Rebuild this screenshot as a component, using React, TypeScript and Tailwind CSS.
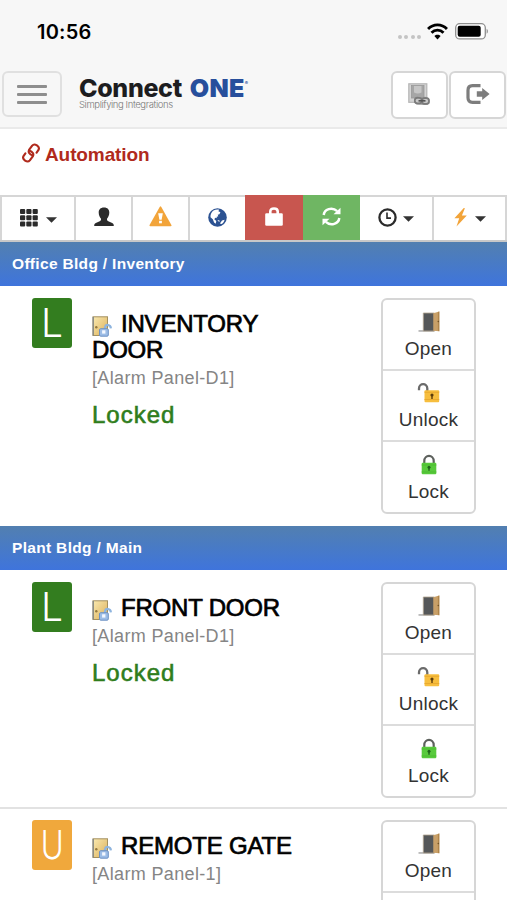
import React from "react";

type Door = {
  name: string;
  panel: string;
  badge: "L" | "U";
  status?: string;
};

type Area = {
  title: string;
  doors: Door[];
};

const areas: Area[] = [
  {
    title: "Office Bldg / Inventory",
    doors: [
      { name: "INVENTORY DOOR", panel: "[Alarm Panel-D1]", badge: "L", status: "Locked" },
    ],
  },
  {
    title: "Plant Bldg / Main",
    doors: [
      { name: "FRONT DOOR", panel: "[Alarm Panel-D1]", badge: "L", status: "Locked" },
      { name: "REMOTE GATE", panel: "[Alarm Panel-1]", badge: "U" },
    ],
  },
];

const WifiIcon = () => (
  <svg width="21" height="17" viewBox="0 0 20 16" fill="none" stroke="#000" strokeWidth="2.7">
    <path d="M1 5.6C6 .4 14 .4 19 5.6" />
    <path d="M4.3 9.2c3.2-3.3 8.2-3.3 11.4 0" />
    <path d="M10 15.6l-3-3.2c1.6-1.7 4.4-1.7 6 0z" fill="#000" stroke="none" />
  </svg>
);

const BatteryIcon = () => (
  <svg width="34" height="17" viewBox="0 0 34 17">
    <rect x="0.7" y="0.7" width="29.6" height="15.2" rx="4" fill="#fff" stroke="#8e8e8e" strokeWidth="1.3" />
    <rect x="2.7" y="2.8" width="23" height="11" rx="2" fill="#000" />
    <path d="M31.6 5.8c1.7.7 1.7 4.3 0 5z" fill="#8e8e8e" />
  </svg>
);

const LinkPlateIcon = () => (
  <svg width="23" height="24" viewBox="0 0 23 24">
    <rect x="0.8" y="0.8" width="18" height="18.5" fill="#d4d4d4" stroke="#b5b5b5" strokeWidth="1.2" />
    <rect x="3.5" y="2.500" width="12.500" height="12.500" fill="#a6a6a6" stroke="#999" strokeWidth="0.8" />
    <path d="M6 3h7.500v6.500q-3.700 2-7.500 0z" fill="#c6c6c6" />
    <path d="M6.500 15.500q3-4 6 0l2-1q4-2 7 2v4q-1.500 1.500-4 1.500l-9-.5-2.500-2z" fill="#949494" />
    <rect x="6.800" y="14.800" width="7" height="5.600" rx="2.600" fill="#c9c9c9" stroke="#7b7b7b" strokeWidth="1.700" />
    <rect x="14" y="15.200" width="7" height="5.600" rx="2.600" fill="#c9c9c9" stroke="#7b7b7b" strokeWidth="1.700" />
    <path d="M10.500 17.800h7" stroke="#555" strokeWidth="1.700" />
  </svg>
);

const LogoutIcon = () => (
  <svg width="24" height="20" viewBox="0 0 24 20">
    <path d="M14.500 1.700H6.500Q2 1.700 2 6.200v7.600q0 4.500 4.500 4.500h8" fill="none" stroke="#7d7d7d" strokeWidth="3.200" />
    <path d="M10.800 7.300h5.400V4l7.400 6-7.400 6v-3.300h-5.400z" fill="#7d7d7d" />
  </svg>
);

const ChainIcon = () => (
  <svg width="18" height="20" viewBox="0 0 18 20" fill="none" stroke="#b02a1c" strokeWidth="2.1" strokeLinecap="round" strokeLinejoin="round">
    <path d="M10.900 12.600C7.200 11.300 5.800 8.900 7.200 6.700L10.200 2.600C12.600-.2 18.300 3.500 16.500 6.900L14.600 9.600" />
    <path d="M7.100 7.400C10.800 8.700 12.200 11.100 10.800 13.300L7.800 17.400C5.400 20.200-.3 16.500 1.500 13.100L3.400 10.400" />
  </svg>
);

const Caret = () => (
  <svg className="mt-1" width="11" height="6" viewBox="0 0 11 6">
    <path d="M0 .2h11L5.500 5.700z" fill="#333" />
  </svg>
);

const GridIcon = () => (
  <svg width="18" height="18" viewBox="0 0 18 18" fill="#2b2b2b">
    {[0, 6.3, 12.6].map((y) =>
      [0, 6.3, 12.6].map((x) => (
        <rect key={`${x}-${y}`} x={x} y={y} width="5.200" height="5" rx="1" />
      ))
    )}
  </svg>
);

const UserIcon = () => (
  <svg width="20" height="20" viewBox="0 0 20 20" fill="#2b2b2b">
    <path d="M10 .5c3.700 0 5.300 2.200 5.300 5.100 0 2.700-1.100 4.800-2.200 5.900-.4 1.500.1 2.300 1.200 2.800l3.900 1.700c1.100.5 1.600 1 1.600 3H.2c0-2 .5-2.500 1.600-3l3.900-1.700c1.100-.5 1.600-1.300 1.200-2.800-1.100-1.100-2.200-3.200-2.200-5.900C4.700 2.700 6.300.5 10 .5z" />
  </svg>
);

const WarningIcon = () => (
  <svg width="23" height="21" viewBox="0 0 23 21">
    <path d="M10.700.9q.8-1.300 1.600 0L22.400 19q.5 1.300-.8 1.300H1.400Q.1 20.300.6 19z" fill="#f2a43a" />
    <path d="M9.200 7.300h4.600l-1.200 6.500h-2.200z" fill="#fff" />
    <rect x="10.100" y="14.800" width="2.800" height="2.500" fill="#fff" />
  </svg>
);

const GlobeIcon = () => (
  <svg width="19" height="19" viewBox="0 0 19 19">
    <circle cx="9.500" cy="9.500" r="9.300" fill="#2c5292" />
    <path d="M5.500 2.600c2-1.200 4-1.300 5.600-.8l-.7 1.500 2 .9-1 2-1.700.5.600 1.600-2 .6 1 1.300-2-.4-1 1.400 2 1.900-.6 2.700-1.600-1.400-1.300-3.200-2.300-2c-.3-2.600 1-5 3-6.600z" fill="#fff" />
    <path d="M14 12.500l2.600-.8c-.4 1.900-1.400 3.200-2.900 4.200l-1.800-.4zM9.800 12l2 .7-.3 1-1.700-.6z" fill="#fff" />
  </svg>
);

const LockdownIcon = () => (
  <svg width="18" height="19" viewBox="0 0 18 19">
    <path d="M5.300 9V4.500Q5.300 1.500 9 1.500T12.700 4.500V9" fill="none" stroke="#fff" strokeWidth="2.600" />
    <rect x="0.200" y="6.300" width="17.600" height="12.500" rx="1.300" fill="#fff" />
  </svg>
);

const RefreshIcon = () => (
  <svg width="19" height="19" viewBox="0 0 19 19">
    <path d="M1.700 8C2.300 2.300 10-.6 15.200 4.200M17.300 11C16.700 16.700 9 19.600 3.800 14.800" fill="none" stroke="#fff" strokeWidth="2.500" />
    <path d="M18.500.8v6.500H11.500zM.5 18.200v-6.500h7z" fill="#fff" />
  </svg>
);

const ClockIcon = () => (
  <svg width="19" height="19" viewBox="0 0 19 19" fill="none" stroke="#2b2b2b">
    <circle cx="9.500" cy="9.500" r="8.100" strokeWidth="2.300" />
    <path d="M9 4.500v5.600h4" strokeWidth="1.600" />
  </svg>
);

const BoltIcon = () => (
  <svg width="13" height="19" viewBox="0 0 13 19" fill="#f2a43a">
    <path d="M9.800 0L.4 10.300h4.800L2.500 18.600 12.800 7.400H7.900L10.900.2z" />
  </svg>
);

// small door glyph drawn in front of every door name
const DoorLockIcon = () => (
  <svg className="mr-2 inline-block align-[-5px]" width="21" height="21" viewBox="0 0 21 21">
    <defs>
      <linearGradient id="doorWood" x1="0" y1="0" x2="1" y2="1">
        <stop offset="0" stopColor="#f9e9b0" />
        <stop offset="1" stopColor="#dcb05a" />
      </linearGradient>
    </defs>
    <rect x="1" y="0.800" width="14.500" height="18.700" fill="url(#doorWood)" stroke="#a3905f" strokeWidth="1" />
    <path d="M1.200 1v18.500" stroke="#7c8388" strokeWidth="1.200" />
    <circle cx="4.300" cy="11.200" r="1.200" fill="#94783c" />
    <path d="M13 13v-1.500c.5-3.600 5.600-3.400 5.900.8" fill="none" stroke="#8eb4de" strokeWidth="2.200" />
    <rect x="7.500" y="12.700" width="8.800" height="7.500" rx="1.200" fill="#9dbde6" stroke="#6d92c4" strokeWidth="1" />
    <rect x="10.100" y="14.300" width="3.300" height="3.300" fill="#f4f8ff" />
  </svg>
);

const OpenDoorIcon = () => (
  <svg width="24" height="22" viewBox="0 0 24 22">
    <path d="M1.500 20.700h16v-1.500h-16z" fill="#aaa" />
    <path d="M6.300 2h11v18h-11z" fill="#555759" stroke="#b3a58f" strokeWidth="0.800" />
    <path d="M16.300 2.300L22.300.500v19.700l-6-.5z" fill="#c9a068" />
    <path d="M20.900 1l1.400-.5v19.700l-1.400-.2z" fill="#b0854b" />
    <circle cx="21.300" cy="10.500" r=".8" fill="#6e5127" />
  </svg>
);

const UnlockIcon = () => (
  <svg width="24" height="22" viewBox="0 0 24 22">
    <path d="M2 8.200V6.500C2 .7 10.300.7 10.300 6.500V9" fill="none" stroke="#6b6b6b" strokeWidth="2.300" />
    <rect x="7.500" y="8.300" width="14.700" height="11.900" rx="1" fill="#f7be3e" />
    <path d="M7.500 17.500h14.700M7.500 10.300h14.700" stroke="#e9aa30" strokeWidth="1" />
    <circle cx="15" cy="13" r="1.600" fill="#5b3c0c" />
    <path d="M14.300 13h1.400v4h-1.400z" fill="#5b3c0c" />
  </svg>
);

const LockIcon = () => (
  <svg width="24" height="22" viewBox="0 0 24 22">
    <path d="M7.300 10V7C7.300.200 16.700.200 16.700 7V10" fill="none" stroke="#5d615d" strokeWidth="2.200" />
    <rect x="4.700" y="8.800" width="14.600" height="11.500" rx="1" fill="#58ca3c" />
    <path d="M4.700 18h14.600M4.700 11h14.600" stroke="#4cbc31" strokeWidth="1" />
    <circle cx="12" cy="13.300" r="1.500" fill="#1f641a" />
    <path d="M11.300 13h1.400v3.700h-1.400z" fill="#1f641a" />
  </svg>
);

const actions = [
  { label: "Open", icon: <OpenDoorIcon /> },
  { label: "Unlock", icon: <UnlockIcon /> },
  { label: "Lock", icon: <LockIcon /> },
];

const DoorRow = ({ door }: { door: Door }) => (
  <div className="flex h-[239px] items-start pt-[11px] pr-[31px] pl-8 first:pt-3">
    <div
      className={`flex h-[50px] w-10 shrink-0 items-center justify-center rounded-[3px] pb-px font-['Inter',sans-serif] text-[39px] leading-none font-light text-white ${
        door.badge === "L" ? "bg-[#337d1f]" : "bg-[#f0a83c]"
      }`}
    >
      <span className={door.badge === "L" ? "" : "scale-x-80"}>{door.badge}</span>
    </div>
    <div className="ml-5 w-[230px] pt-[13px]">
      <h2 className="w-[225px] text-[24px] leading-[26px] tracking-[-0.2px] text-black [-webkit-text-stroke:0.7px_#000]">
        <DoorLockIcon />
        {door.name}
      </h2>
      <p className="mt-[3px] text-[18px] leading-[24px] tracking-[0.35px] text-[#858585]">{door.panel}</p>
      {door.status && (
        <p className="mt-[10px] text-[24px] leading-[30px] tracking-[1px] text-[#2f7d1c] [-webkit-text-stroke:0.6px_#2f7d1c]">
          {door.status}
        </p>
      )}
    </div>
    <div className="ml-auto w-[95px] shrink-0 divide-y-2 divide-[#dcdcdc] rounded-md border-2 border-[#d6d6d6]">
      {actions.map((action) => (
        <button key={action.label} className="flex h-[71px] w-full flex-col items-center pt-[11px] last:h-[70px] last:pt-3">
          {action.icon}
          <span className="mt-[3px] text-[19px] leading-[26px] tracking-[0.2px] text-[#333]">{action.label}</span>
        </button>
      ))}
    </div>
  </div>
);

const App = () => {
  return (
    <div className="h-[900px] w-[507px] overflow-hidden bg-white font-['Liberation_Sans',Arial,sans-serif]">
      {/* Header */}
      <header className="h-[129px] border-b-2 border-[#eaeaea] bg-[#f7f7f7]">
        <div className="flex h-[71px] items-start justify-between pt-[22px] pr-[18px] pl-[37px]">
          <span className="font-['Inter',sans-serif] text-[20px] leading-5 font-semibold tracking-[0.2px] text-black">10:56</span>
          <div className="flex items-center pt-px">
            <div className="mt-[10px] mr-[6px] flex gap-[2.500px]">
              {[0, 1, 2, 3].map((dot) => (
                <span key={dot} className="h-1 w-1 rounded-full bg-[#c4c4c4]" />
              ))}
            </div>
            <WifiIcon />
            <div className="ml-[7px]">
              <BatteryIcon />
            </div>
          </div>
        </div>
        <div className="flex pr-[1px] pl-[2px]">
          <button className="flex h-[46px] w-[60px] flex-col items-center justify-center gap-[5px] rounded-md border-2 border-[#e0e0e0]">
            <span className="h-[3px] w-[30px] rounded-[1px] bg-[#8e8e8e]" />
            <span className="h-[3px] w-[30px] rounded-[1px] bg-[#8e8e8e]" />
            <span className="h-[3px] w-[30px] rounded-[1px] bg-[#8e8e8e]" />
          </button>
          <div className="ml-[17px] flex flex-col pt-[5px] whitespace-nowrap">
            <div className="flex font-['Inter',sans-serif] text-[25px] leading-[24px] font-extrabold tracking-[-0.35px] text-[#1d1d1f]">
              Connect
              <span className="ml-[8px] font-black tracking-[0.3px] text-[#274f9c]">ONE</span>
              <span className="text-[5px] leading-[14px] text-[#274f9c]">®</span>
            </div>
            <span className="font-['Inter',sans-serif] text-[9.500px] leading-[9px] font-light tracking-[-0.4px] text-[#777]">
              Simplifying Integrations
            </span>
          </div>
          <div className="ml-auto flex gap-[1px]">
            <button className="flex h-[48px] w-[57px] items-center justify-center rounded-md border-2 border-[#d6d6d6] bg-white">
              <LinkPlateIcon />
            </button>
            <button className="flex h-[48px] w-[57px] items-center justify-center rounded-md border-2 border-[#d6d6d6] bg-white pb-[2px]">
              <LogoutIcon />
            </button>
          </div>
        </div>
      </header>

      {/* Page title */}
      <div className="flex h-[66px] pt-[14px] pl-[22px] text-[#b02a1c]">
        <ChainIcon />
        <h1 className="ml-[5px] text-[19px] leading-6 font-bold tracking-[-0.1px]">Automation</h1>
      </div>

      {/* Toolbar */}
      <nav className="flex h-[47px] border-b-2 border-b-[#c8c8c8] text-[#333]">
        <button className="flex w-[76px] items-center justify-center gap-[8px] border-t-2 border-r-2 border-l-2 border-[#d6d6d6] pb-[2px]">
          <GridIcon />
          <Caret />
        </button>
        <button className="flex w-[57px] items-center justify-center border-t-2 border-r-2 border-[#d6d6d6] pb-[3px]">
          <UserIcon />
        </button>
        <button className="flex w-[57px] items-center justify-center border-t-2 border-r-2 border-[#d6d6d6] pb-[4px]">
          <WarningIcon />
        </button>
        <button className="flex w-[55px] items-center justify-center border-t-2 border-[#d6d6d6] pb-[3px]">
          <GlobeIcon />
        </button>
        <button className="flex w-[58px] items-center justify-center bg-[#c8564f] pb-[2px]">
          <LockdownIcon />
        </button>
        <button className="flex w-[57px] items-center justify-center bg-[#6fb663] pb-[2px]">
          <RefreshIcon />
        </button>
        <button className="flex w-[74px] items-center justify-center gap-[6px] border-t-2 border-r-2 border-[#d6d6d6] pb-[3px]">
          <ClockIcon />
          <Caret />
        </button>
        <button className="flex w-[73px] items-center justify-center gap-[8px] border-t-2 border-r-2 border-[#d6d6d6] pb-[3px]">
          <BoltIcon />
          <Caret />
        </button>
      </nav>

      {/* Doors by area */}
      {areas.map((area) => (
        <section key={area.title} className="pb-px">
          <h2 className="h-[44px] bg-linear-to-b from-[#527fb0] to-[#3f74dc] pl-3 text-[15.500px] leading-[44px] font-bold tracking-[0.32px] text-white">
            {area.title}
          </h2>
          <div className="divide-y-2 divide-[#e2e2e2]">
            {area.doors.map((door) => (
              <DoorRow key={door.name} door={door} />
            ))}
          </div>
        </section>
      ))}
    </div>
  );
};

export default App;
